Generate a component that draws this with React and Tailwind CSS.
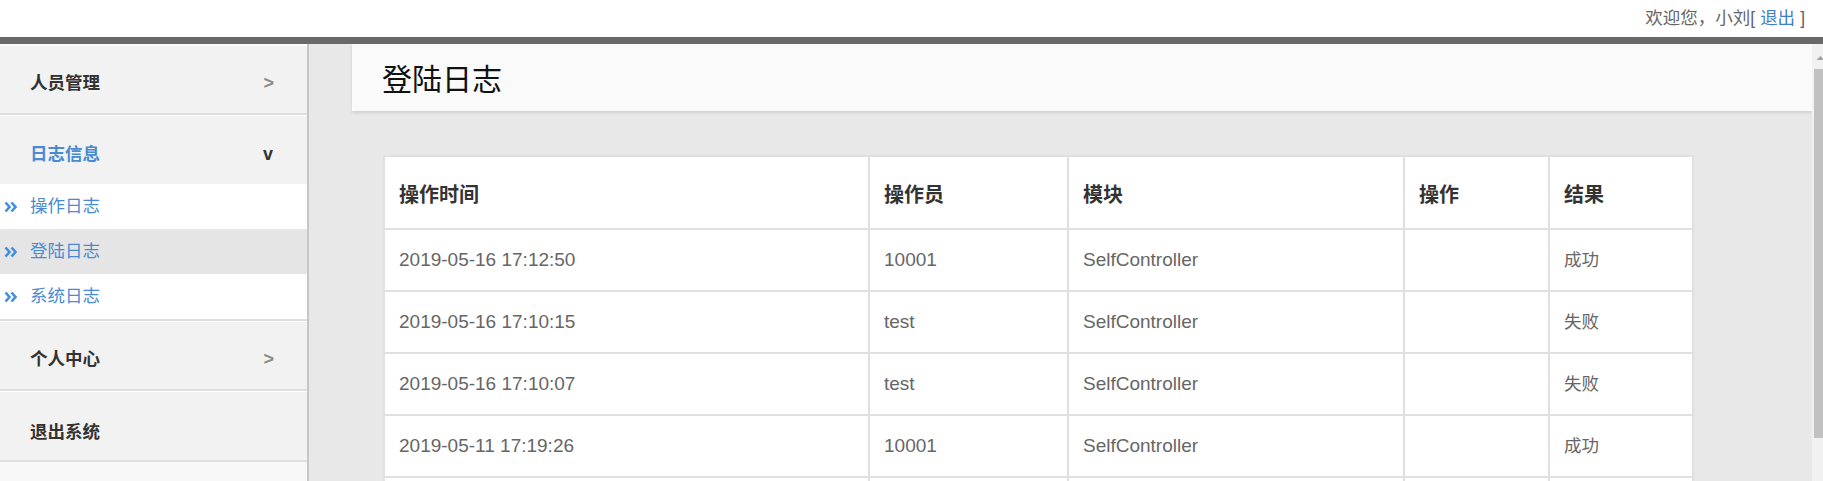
import React from "react";

const rows = [
  ["2019-05-16 17:12:50", "10001", "SelfController", "", "成功"],
  ["2019-05-16 17:10:15", "test", "SelfController", "", "失败"],
  ["2019-05-16 17:10:07", "test", "SelfController", "", "失败"],
  ["2019-05-11 17:19:26", "10001", "SelfController", "", "成功"],
  ["", "", "", "", ""],
];

const heads = ["操作时间", "操作员", "模块", "操作", "结果"];

function Chevrons() {
  return (
    <svg width="14" height="12" viewBox="0 0 14 12" className="shrink-0">
      <path d="M1.5 1.5 L5.5 6 L1.5 10.5 M7.5 1.5 L11.5 6 L7.5 10.5" fill="none" stroke="#3f8ee0" strokeWidth="2.6" />
    </svg>
  );
}

function SubItem({ label, active }) {
  return (
    <div className={"flex h-[45px] items-center pl-[4px] " + (active ? "bg-[#e5e5e5]" : "bg-white")}>
      <Chevrons />
      <span className="ml-[12px] text-[17.5px] text-[#4a8ad4]">{label}</span>
    </div>
  );
}

export default function App() {
  return (
    <div className="h-[481px] overflow-hidden bg-white font-['Liberation_Sans','Noto_Sans_CJK_SC',sans-serif]">
      <div className="flex h-[37px] items-center justify-end pr-[18px] text-[17.5px] text-[#666]">
        欢迎您，小刘[ <span className="mx-[5px] text-[#3f7fca]">退出</span>]
      </div>
      <div className="h-[7px] bg-[#696969]" />

      <div className="flex h-[437px]">
        {/* sidebar */}
        <div className="flex w-[309px] shrink-0 flex-col border-r-2 border-[#c6c6c6] bg-[#f2f2f2]">
          <div className="border-t-2 border-b-2 border-t-[#fafafa] border-b-[#dedede]">
            <div className="flex h-[67px] items-center justify-between pl-[30px] pr-[33px] pt-[7px]">
              <span className="text-[17.5px] font-bold text-[#333]">人员管理</span>
              <span className="text-[18px] font-bold text-[#8a8a8a]">&gt;</span>
            </div>
          </div>
          <div className="border-t border-white">
            <div className="flex h-[68px] items-center justify-between pl-[30px] pr-[34px] pt-[8px]">
              <span className="text-[17.5px] font-bold text-[#4a8ad4]">日志信息</span>
              <span className="text-[18px] font-bold text-[#333]">v</span>
            </div>
          </div>
          <div className="border-b-2 border-[#dedede]">
            <SubItem label="操作日志" />
            <SubItem label="登陆日志" active />
            <SubItem label="系统日志" />
          </div>
          <div className="border-t border-b-2 border-t-white border-b-[#dedede]">
            <div className="flex h-[67px] items-center justify-between pl-[30px] pr-[33px] pt-[8px]">
              <span className="text-[17.5px] font-bold text-[#333]">个人中心</span>
              <span className="text-[18px] font-bold text-[#8a8a8a]">&gt;</span>
            </div>
          </div>
          <div className="border-t border-b-2 border-t-white border-b-[#dedede]">
            <div className="flex h-[68px] items-center pl-[30px] pt-[12px]">
              <span className="text-[17.5px] font-bold text-[#333]">退出系统</span>
            </div>
          </div>
          <div className="flex-1 bg-[#f8f8f8]" />
        </div>

        {/* main */}
        <div className="flex flex-1 bg-[#e8e8e8]">
          <div className="flex-1">
            <div className="ml-[43px] flex h-[67px] items-center bg-[#fafafa] pl-[30px] pt-[5px] shadow-[0_2px_3px_rgba(0,0,0,0.1)]">
              <h1 className="text-[30px] font-normal leading-none text-[#111]">登陆日志</h1>
            </div>

            <div className="ml-[74px] mt-[44px] grid w-[1311px] grid-cols-[485px_199px_336px_145px_144px] border-l-2 border-t-2 border-[#e0e0e0] bg-white">
              {heads.map((h) => (
                <div key={h} className="flex h-[73px] items-center border-b-2 border-r-2 border-[#e0e0e0] pl-[14px] pt-[5px] text-[20px] font-bold text-[#333]">
                  {h}
                </div>
              ))}
              {rows.map((r, i) =>
                r.map((c, j) => (
                  <div
                    key={i + "-" + j}
                    className={"flex h-[62px] items-center border-b-2 border-r-2 border-[#e0e0e0] pl-[14px] text-[#666] " + (j === 4 ? "text-[17.5px]" : "text-[19px]")}
                  >
                    {c}
                  </div>
                ))
              )}
            </div>
          </div>

          {/* scrollbar */}
          <div className="flex w-[11px] shrink-0 flex-col bg-[#f1f1f1]">
            <svg width="11" height="25" viewBox="0 0 11 25">
              <polygon points="4.5,16 12.5,16 8.5,12" fill="#a3a3a3" />
            </svg>
            <div className="ml-[2px] h-[369px] bg-[#c1c1c1]" />
          </div>
        </div>
      </div>
    </div>
  );
}
